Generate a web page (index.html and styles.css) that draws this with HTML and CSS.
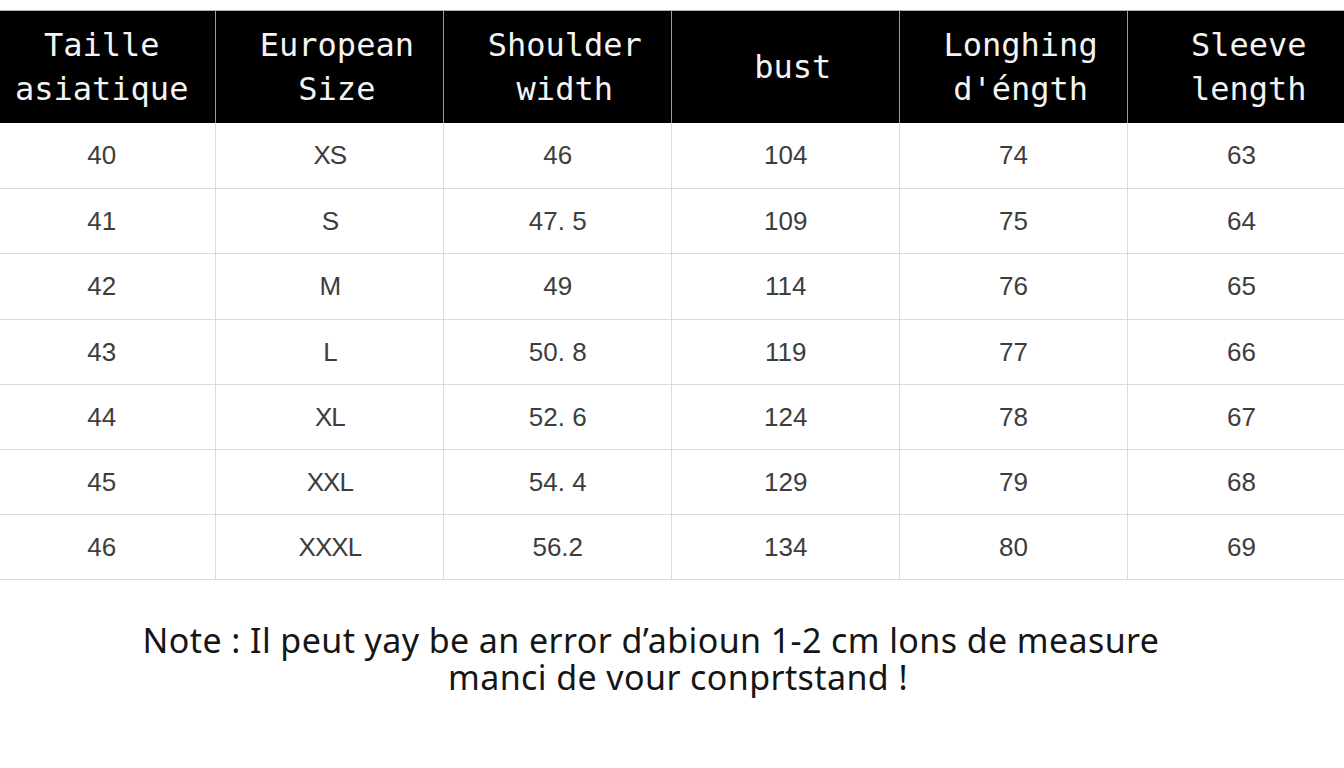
FILE: index.html
```html
<!DOCTYPE html>
<html lang="fr">
<head>
<meta charset="utf-8">
<title>Size chart</title>
<link rel="stylesheet" href="styles.css">
</head>
<body>
<div class="page">
  <table class="chart">
    <thead>
      <tr>
        <th class="first">Taille<br>asiatique</th>
        <th>European<br>Size</th>
        <th>Shoulder<br>width</th>
        <th>bust</th>
        <th>Longhing<br>d'éngth</th>
        <th>Sleeve<br>length</th>
      </tr>
    </thead>
    <tbody>
      <tr class="tall"><td>40</td><td class="sz">XS</td><td>46</td><td>104</td><td>74</td><td>63</td></tr>
      <tr><td>41</td><td class="sz">S</td><td>47. 5</td><td>109</td><td>75</td><td>64</td></tr>
      <tr class="tall"><td>42</td><td class="sz">M</td><td>49</td><td>114</td><td>76</td><td>65</td></tr>
      <tr><td>43</td><td class="sz">L</td><td>50. 8</td><td>119</td><td>77</td><td>66</td></tr>
      <tr><td>44</td><td class="sz">XL</td><td>52. 6</td><td>124</td><td>78</td><td>67</td></tr>
      <tr><td>45</td><td class="sz">XXL</td><td>54. 4</td><td>129</td><td>79</td><td>68</td></tr>
      <tr><td>46</td><td class="sz">XXXL</td><td>56.2</td><td>134</td><td>80</td><td>69</td></tr>
    </tbody>
  </table>
  <div class="note">
    <span class="line">Note : Il peut yay be an error d’abioun 1-2 cm lons de measure</span>
    <span class="line l2">manci de vour conprtstand !</span>
  </div>
</div>
</body>
</html>
```
FILE: styles.css
```css
html, body {
  margin: 0;
  padding: 0;
  background: #ffffff;
}
.page {
  width: 1344px;
  height: 768px;
  overflow: hidden;
  padding-top: 10px;
  box-sizing: border-box;
}
.chart {
  margin-left: -12px;
  width: 1368px;
  table-layout: fixed;
  border-collapse: collapse;
}
.chart th {
  background: #000;
  color: #f4f4f4;
  font-family: "DejaVu Sans Mono", "Liberation Mono", monospace;
  font-weight: normal;
  font-size: 32px;
  line-height: 44px;
  height: 112px;
  padding: 0 0 0 14px;
  box-sizing: border-box;
  border-left: 1px solid #9a9a9a;
  border-top: 1px solid #b0b0b0;
  text-align: center;
  vertical-align: middle;
}
.chart th.first {
  border-left: none;
  padding-left: 0;
}
.chart td {
  height: 65px;
  padding: 0;
  box-sizing: border-box;
  border: 1px solid #dcdcdc;
  border-top: none;
  text-align: center;
  vertical-align: middle;
  font-family: "Liberation Sans", Arial, sans-serif;
  font-size: 26px;
  color: #3d3d3d;
}
.chart tr.tall td {
  height: 66px;
}
.chart td:first-child {
  border-left: none;
}
.chart td.sz {
  letter-spacing: -1px;
}
.note {
  margin: 42px 0 0 -42px;
  font-family: "Noto Sans", "Noto Sans CJK SC", sans-serif;
  font-size: 34px;
  letter-spacing: 0.4px;
  line-height: 37px;
  color: #151515;
  text-align: center;
}
.note .line {
  display: block;
}
.note .l2 {
  padding-left: 54px;
}
```
